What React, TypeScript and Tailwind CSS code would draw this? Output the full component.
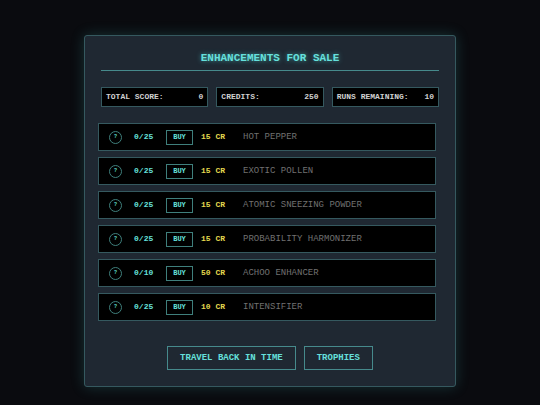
const stats = [
  { label: "TOTAL SCORE:", value: 0 },
  { label: "CREDITS:", value: 250 },
  { label: "RUNS REMAINING:", value: 10 },
];

const enhancements = [
  { name: "HOT PEPPER", owned: 0, max: 25, cost: 15 },
  { name: "EXOTIC POLLEN", owned: 0, max: 25, cost: 15 },
  { name: "ATOMIC SNEEZING POWDER", owned: 0, max: 25, cost: 15 },
  { name: "PROBABILITY HARMONIZER", owned: 0, max: 25, cost: 15 },
  { name: "ACHOO ENHANCER", owned: 0, max: 10, cost: 50 },
  { name: "INTENSIFIER", owned: 0, max: 25, cost: 10 },
];

export default function App() {
  return (
    <div className="min-h-screen bg-[#0a0b0f] pt-[35px] pb-[18px] font-['Courier_New','Liberation_Mono',monospace] text-[#66e0dc]">
      <main className="mx-auto w-full max-w-[372px] rounded-[3px] border border-[#35595f] bg-[#1f2832] px-[13px] py-4 shadow-[0_0_14px_rgba(70,190,190,0.22)]">
        <header className="px-[3px]">
          <h1 className="border-b border-[#468a8c] pb-[6px] text-center text-[11px] leading-3 font-bold [text-shadow:0_0_5px_rgba(80,220,220,0.6)]">
            ENHANCEMENTS FOR SALE
          </h1>
          <dl className="mt-4 grid grid-cols-3 gap-2 text-[8px] leading-[10px] font-bold text-[#d0d0d0]">
            {stats.map((stat) => (
              <div key={stat.label} className="flex justify-between border border-[#35595f] bg-black p-1">
                <dt>{stat.label}</dt>
                <dd>{stat.value}</dd>
              </div>
            ))}
          </dl>
        </header>

        <ul className="mt-4 flex flex-col gap-[6px] pr-[6px]">
          {enhancements.map((item) => (
            <li
              key={item.name}
              className="flex h-7 items-center border border-[#35595f] bg-black pl-[10px] text-[8px] leading-[10px] font-bold"
            >
              <button
                aria-label={"About " + item.name}
                className="flex size-[13px] items-center justify-center rounded-full border border-[#3f7f7c] text-[5px]"
              >
                ?
              </button>
              <span className="ml-3 w-8">
                {item.owned}/{item.max}
              </span>
              <button className="h-[15px] w-[27px] border border-[#3f7f7c] text-[7px]">BUY</button>
              <span className="ml-2 w-[42px] text-[#e3d84f]">{item.cost} CR</span>
              <span className="text-[9px] font-normal text-[#707070]">{item.name}</span>
            </li>
          ))}
        </ul>

        <footer className="mt-[25px] flex justify-center gap-2 text-[9px] leading-[10px] font-bold">
          <button className="h-6 border border-[#468a8c] px-3">TRAVEL BACK IN TIME</button>
          <button className="h-6 border border-[#468a8c] px-3">TROPHIES</button>
        </footer>
      </main>
    </div>
  );
}
